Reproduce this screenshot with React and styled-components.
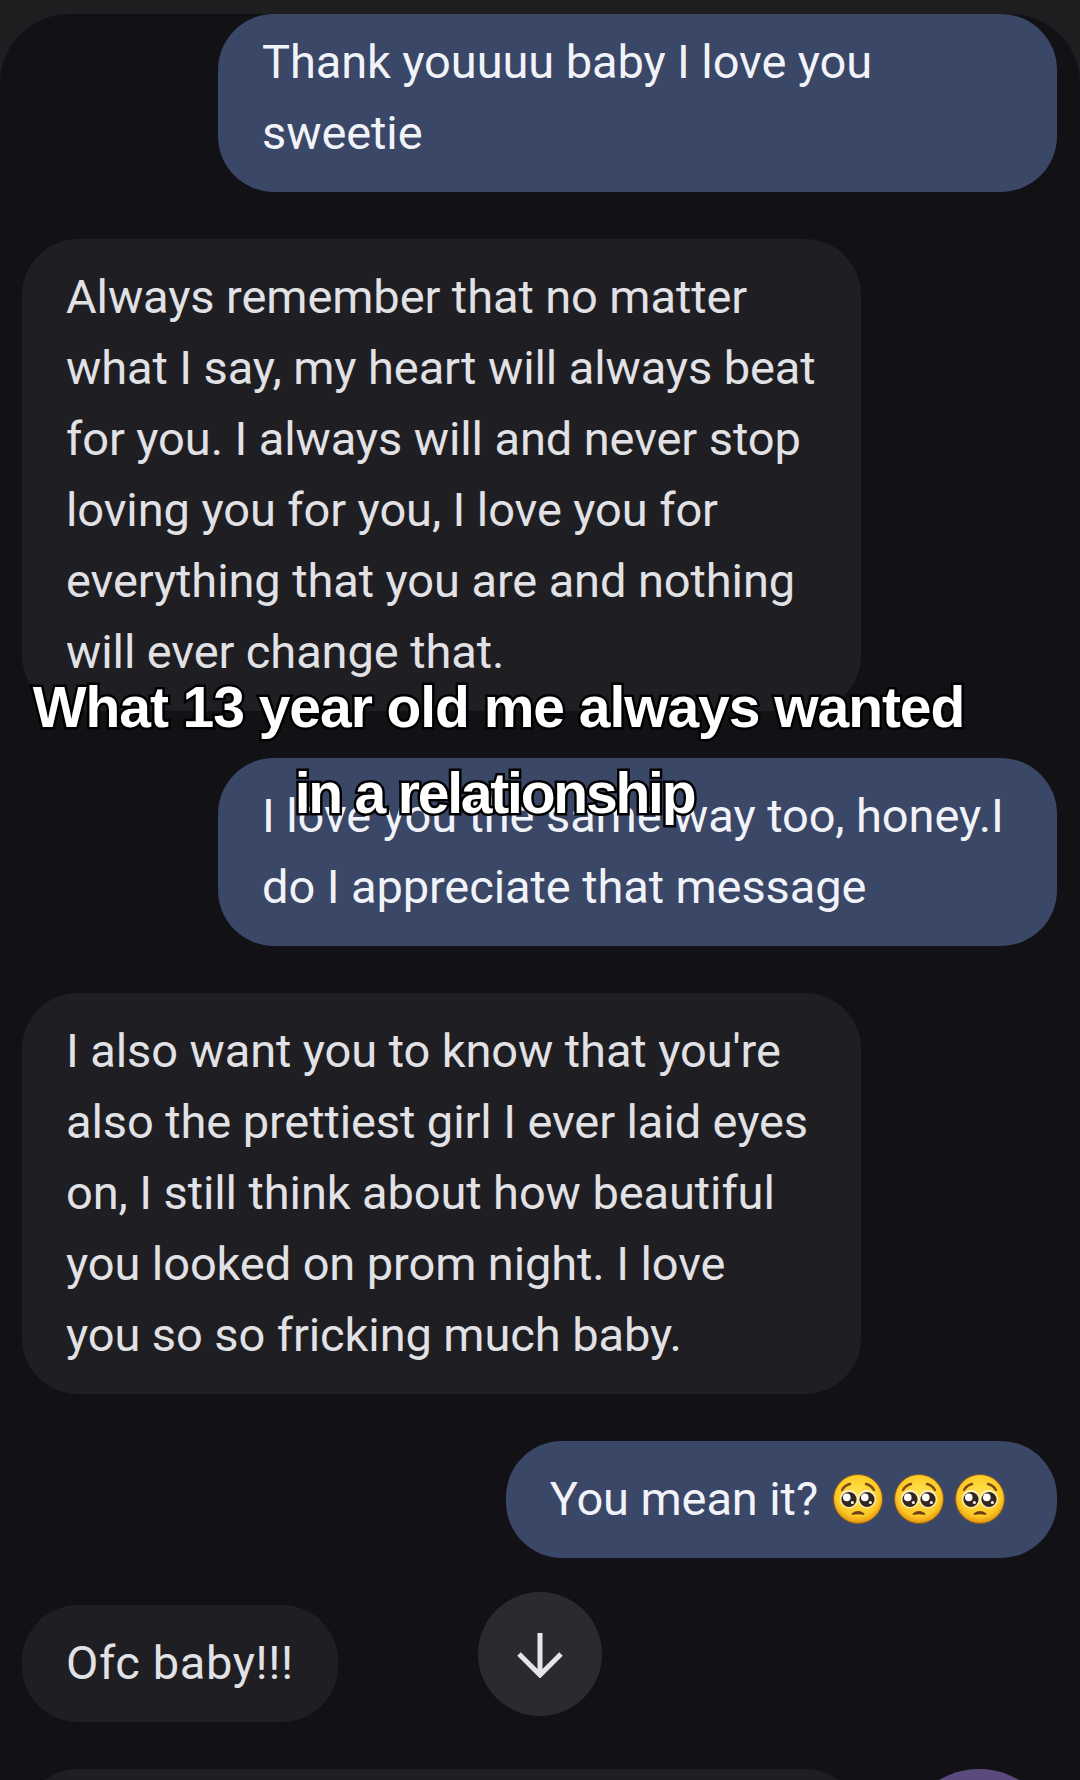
import React, { useId } from 'react';
import styled, { createGlobalStyle } from 'styled-components';

const GlobalStyle = createGlobalStyle`
  html, body {
    margin: 0;
    padding: 0;
    background: #1e1e20;
  }
`;

const Screen = styled.div`
  position: relative;
  width: 1080px;
  height: 1780px;
  overflow: hidden;
  padding-top: 14px;
  box-sizing: border-box;
  background: #1e1e20;
  font-family: Roboto, "Noto Sans", sans-serif;
`;

const Thread = styled.div`
  display: flex;
  flex-direction: column;
  gap: 47px;
  min-height: 1800px;
  padding: 0 23px 0 22px;
  border-radius: 70px 70px 0 0;
  background: #121216;
`;

const Bubble = styled.div`
  box-sizing: border-box;
  width: ${(p) => (p.$fit ? 'fit-content' : '839px')};
  padding: ${(p) => (p.$cropped ? '12px' : '22px')} 44px 24px;
  border-radius: 56px;
  font-size: 47px;
  line-height: 71px;
  letter-spacing: -0.1px;
`;

const Outgoing = styled(Bubble)`
  align-self: flex-end;
  background: #3a4767;
  color: #f1f3f8;
`;

const Incoming = styled(Bubble)`
  align-self: flex-start;
  background: #1f1f23;
  color: #e2e2e6;
`;

const ShortReply = styled(Incoming)`
  width: 316px;
  letter-spacing: 0.6px;
`;

const Line = styled.span`
  display: block;
  white-space: nowrap;
`;

const EmojiLine = styled(Line)`
  display: flex;
  align-items: center;
`;

const Emojis = styled.span`
  display: inline-flex;
  gap: 11px;
  margin: 0 8px 0 15px;
`;

const FooterRow = styled.div`
  display: flex;
  justify-content: space-between;
  align-items: flex-start;
`;

const Draft = styled.div`
  width: 839px;
  height: 120px;
  border-radius: 56px;
  background: #1f1f23;
`;

const Avatar = styled.div`
  width: 156px;
  height: 156px;
  border-radius: 50%;
  background: #5b4a7d;
`;

const ScrollButton = styled.div`
  position: absolute;
  left: 478px;
  top: 1592px;
  display: flex;
  align-items: center;
  justify-content: center;
  width: 124px;
  height: 124px;
  border-radius: 50%;
  background: #2b2b2f;
`;

const Caption = styled.div`
  position: absolute;
  left: 0;
  top: 664px;
  width: 997px;
  font-family: "Liberation Sans", Arial, sans-serif;
  font-size: 57px;
  font-weight: 700;
  line-height: 86px;
  letter-spacing: -1.05px;
  text-align: center;
  color: #fff;
  -webkit-text-stroke: 5px #000;
  paint-order: stroke fill;
`;

const CaptionTail = styled.span`
  display: block;
  margin-right: 8px;
  letter-spacing: -2.2px;
`;

const PleadingFace = () => {
  const id = useId();
  return (
    <svg width="50" height="50" viewBox="0 0 50 50">
      <defs>
        <radialGradient id={id} cx="50%" cy="42%" r="58%">
          <stop offset="0%" stopColor="#ffe552" />
          <stop offset="75%" stopColor="#fdc925" />
          <stop offset="100%" stopColor="#e2920f" />
        </radialGradient>
      </defs>
      <circle cx="25" cy="25" r="24.5" fill={`url(#${id})`} stroke="#8a5a1c" strokeWidth="1" />
      <path d="M9 16 Q12 11 17 10 M33 10 Q38 11 41 16" fill="none" stroke="#7a4a14" strokeWidth="2.4" strokeLinecap="round" />
      <circle cx="16" cy="25" r="9.2" fill="#fff1b8" />
      <circle cx="34" cy="25" r="9.2" fill="#fff1b8" />
      <circle cx="16" cy="25.5" r="7.6" fill="#33261f" />
      <circle cx="34" cy="25.5" r="7.6" fill="#33261f" />
      <circle cx="13.8" cy="23.4" r="3.8" fill="#fff" />
      <circle cx="31.8" cy="23.4" r="3.8" fill="#fff" />
      <circle cx="19.4" cy="28.4" r="1.5" fill="#fff" />
      <circle cx="37.4" cy="28.4" r="1.5" fill="#fff" />
      <path d="M19.5 40 Q25 36 30.5 40 Q25 38.6 19.5 40 Z" fill="#6b3f14" stroke="#6b3f14" strokeWidth="1.8" strokeLinejoin="round" />
    </svg>
  );
};

const ArrowDownIcon = () => (
  <svg width="48" height="48" viewBox="0 0 48 48">
    <path d="M24 3 V45 M3 24 L24 45 L45 24" fill="none" stroke="#e6e6ea" strokeWidth="5" />
  </svg>
);

const Message = ({ as: Kind, lines, ...rest }) => (
  <Kind {...rest}>
    {lines.map((line) => (
      <Line key={line}>{line}</Line>
    ))}
  </Kind>
);

const App = () => (
  <Screen>
    <GlobalStyle />
    <Thread>
      <Message as={Outgoing} $cropped lines={['Thank youuuu baby I love you', 'sweetie']} />
      <Message
        as={Incoming}
        lines={[
          'Always remember that no matter',
          'what I say, my heart will always beat',
          'for you. I always will and never stop',
          'loving you for you, I love you for',
          'everything that you are and nothing',
          'will ever change that.',
        ]}
      />
      <Message as={Outgoing} lines={['I love you the same way too, honey.I', 'do I appreciate that message']} />
      <Message
        as={Incoming}
        lines={[
          "I also want you to know that you're",
          'also the prettiest girl I ever laid eyes',
          'on, I still think about how beautiful',
          'you looked on prom night. I love',
          'you so so fricking much baby.',
        ]}
      />
      <Outgoing $fit>
        <EmojiLine>
          You mean it?
          <Emojis>
            <PleadingFace />
            <PleadingFace />
            <PleadingFace />
          </Emojis>
        </EmojiLine>
      </Outgoing>
      <Message as={ShortReply} lines={['Ofc baby!!!']} />
      <FooterRow>
        <Draft />
        <Avatar />
      </FooterRow>
    </Thread>
    <ScrollButton>
      <ArrowDownIcon />
    </ScrollButton>
    <Caption>
      What 13 year old me always wanted
      <CaptionTail>in a relationship</CaptionTail>
    </Caption>
  </Screen>
);

export default App;
